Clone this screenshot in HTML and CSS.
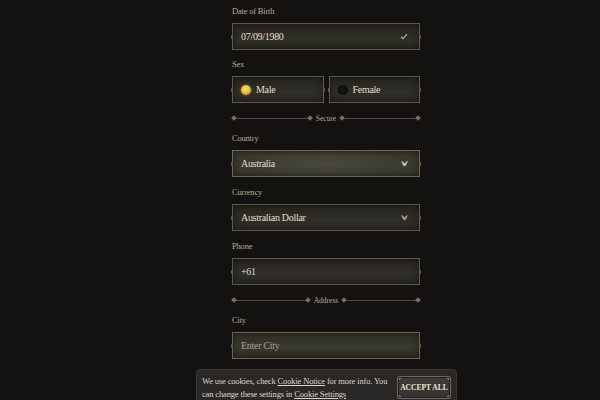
FILE: index.html
```html
<!DOCTYPE html>
<html lang="en">
<head>
<meta charset="UTF-8">
<meta name="viewport" content="width=device-width, initial-scale=1.0">
<title>Create Account</title>
<link rel="stylesheet" href="styles.css">
</head>
<body>
<div class="form">
  <div class="field">
    <label>Date of Birth</label>
    <div class="input">
      <span class="value">07/09/1980</span>
      <svg class="check" width="8" height="7" viewBox="0 0 8 7"><path d="M1 3.8 L3 5.6 L7 1.2" fill="none" stroke="#a9ad6c" stroke-width="1.3"/></svg>
    </div>
  </div>

  <div class="field sex">
    <label>Sex</label>
    <div class="sex-options">
      <div class="input radio-box">
        <span class="radio on"></span>
        <span class="value">Male</span>
      </div>
      <div class="input radio-box">
        <span class="radio"></span>
        <span class="value">Female</span>
      </div>
    </div>
  </div>

  <div class="divider">
    <span class="line"></span>
    <span class="divider-text">Secure</span>
    <span class="line"></span>
  </div>

  <div class="field">
    <label>Country</label>
    <div class="input select active">
      <span class="value">Australia</span>
      <svg class="chevron" width="9" height="7" viewBox="0 0 9 7"><path d="M1.5 1.5 L4.5 4.3 L7.5 1.5 M2.5 3.6 L4.5 5.6 L6.5 3.6" fill="none" stroke="#cfc6b2" stroke-width="1.2"/></svg>
    </div>
  </div>

  <div class="field">
    <label>Currency</label>
    <div class="input select">
      <span class="value">Australian Dollar</span>
      <svg class="chevron" width="9" height="7" viewBox="0 0 9 7"><path d="M1.5 1.5 L4.5 4.3 L7.5 1.5 M2.5 3.6 L4.5 5.6 L6.5 3.6" fill="none" stroke="#a8a08e" stroke-width="1.2"/></svg>
    </div>
  </div>

  <div class="field">
    <label>Phone</label>
    <div class="input">
      <span class="value">+61</span>
    </div>
  </div>

  <div class="divider">
    <span class="line"></span>
    <span class="divider-text">Address</span>
    <span class="line"></span>
  </div>

  <div class="field">
    <label>City</label>
    <div class="input city">
      <span class="value placeholder">Enter City</span>
    </div>
  </div>
</div>

<div class="cookie-bar">
  <p>We use cookies, check <a href="#">Cookie Notice</a> for more info. You can change these settings in <a href="#">Cookie Settings</a></p>
  <button class="accept">ACCEPT ALL</button>
</div>
</body>
</html>
```

FILE: styles.css
```css
body {
  margin: 0;
  background: #131211;
  font-family: "Liberation Serif", "DejaVu Serif", serif;
  color: #e2dac8;
  height: 400px;
  overflow: hidden;
}

.form {
  width: 188px;
  margin-left: 232px;
  padding-top: 6px;
}

.field {
  margin-bottom: 10px;
}

.field.sex {
  margin-top: -1px;
}

.field label {
  display: block;
  font-size: 8.5px;
  letter-spacing: -0.2px;
  line-height: 11px;
  color: #b3a995;
  margin-bottom: 6px;
}

.input {
  position: relative;
  box-sizing: border-box;
  height: 27px;
  display: flex;
  align-items: center;
  padding: 0 9px 0 8px;
  border: 1px solid #5f5947;
  background: linear-gradient(180deg, #25241f 0%, #2f2e27 60%, #2a2923 100%);
  box-shadow: inset 0 0 6px rgba(0, 0, 0, 0.5);
}

/* small notches on the side borders */
.input::before,
.input::after {
  content: "";
  position: absolute;
  top: 50%;
  width: 2px;
  height: 4px;
  margin-top: -2px;
  background: #5c5645;
}

.input::before {
  left: -2px;
}

.input::after {
  right: -2px;
}

.value {
  font-size: 10px;
  letter-spacing: -0.3px;
  color: #e4dccb;
  flex: 1;
}

.placeholder {
  color: #a69d89;
}

.check {
  margin-right: 2px;
}

.select.active {
  background: radial-gradient(ellipse 90% 120% at 50% 50%, #4a493c 0%, #3c3b31 45%, #2c2b25 100%);
  border-color: #6e6752;
}

.chevron {
  margin-right: 1px;
}

.city {
  background: linear-gradient(180deg, #302f28 0%, #3a392f 55%, #2e2d26 100%);
  border-color: #6b644f;
}

.sex-options {
  display: flex;
  gap: 5px;
}

.radio-box {
  flex: 1;
  padding-left: 8px;
}

.radio {
  width: 10px;
  height: 10px;
  border-radius: 50%;
  margin-right: 5px;
  background: #151513;
  box-shadow: inset 0 0 2px #000;
}

.radio.on {
  background: radial-gradient(circle at 45% 40%, #f6e27a 0%, #e2b83a 55%, #a27e1e 100%);
  box-shadow: 0 0 3px rgba(230, 190, 60, 0.6);
}

.divider {
  display: flex;
  align-items: center;
  height: 10px;
  margin: 10px 0;
}

.line {
  flex: 1;
  height: 1px;
  background: #4e483d;
  position: relative;
}

.line::before,
.line::after {
  content: "";
  position: absolute;
  top: -2px;
  width: 4px;
  height: 4px;
  background: #776f5f;
  transform: rotate(45deg);
}

.line::before {
  left: 0;
}

.line::after {
  right: 0;
}

.divider-text {
  font-size: 7.5px;
  color: #b3a995;
  padding: 0 4px;
}

.cookie-bar {
  position: fixed;
  left: 196px;
  bottom: -6px;
  width: 261px;
  height: 37px;
  box-sizing: border-box;
  display: flex;
  align-items: flex-start;
  padding: 5px 5px 0 5px;
  background: #2a2826;
  border: 1px solid #3b3834;
  border-radius: 4px;
}

.cookie-bar p {
  margin: 0;
  flex: 1;
  font-size: 8.5px;
  letter-spacing: -0.15px;
  line-height: 12.5px;
  color: #ddd5c4;
}

.cookie-bar a {
  color: #ddd5c4;
}

.accept {
  margin-left: 5px;
  margin-top: 1px;
  width: 54px;
  height: 23px;
  flex-shrink: 0;
  padding: 0;
  border: 1px solid #6d675b;
  border-radius: 2px;
  background:
    linear-gradient(135deg, #8b8474 3px, transparent 3px),
    linear-gradient(225deg, #8b8474 3px, transparent 3px),
    linear-gradient(45deg, #8b8474 3px, transparent 3px),
    linear-gradient(315deg, #8b8474 3px, transparent 3px),
    linear-gradient(180deg, #3f3d39 0%, #34322f 100%);
  box-shadow: inset 0 0 0 1px #24221f;
  color: #efe7d6;
  font-family: "Liberation Serif", serif;
  font-size: 7.5px;
  font-weight: bold;
  cursor: pointer;
}
```
